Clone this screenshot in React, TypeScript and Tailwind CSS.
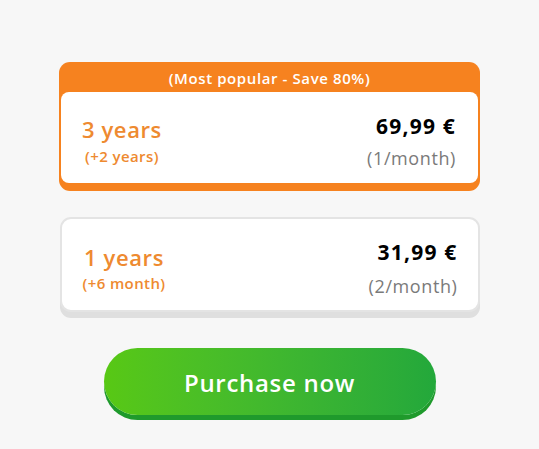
export default function App() {
  const font = { fontFamily: '"Open Sans", "Noto Sans", sans-serif' };
  return (
    <div className="min-h-[449px] w-full bg-[#f7f7f7] flex flex-col items-center pt-[62px]" style={font}>
      {/* Popular plan */}
      <div className="w-[421px] rounded-[11px] bg-[#f6821f] px-[2px] pb-[8px]">
        <div className="h-[30px] flex items-center justify-center text-white text-[15px] font-semibold tracking-[0.6px] pt-[3px]">
          (Most popular - Save 80%)
        </div>
        <div className="h-[91px] rounded-[8px] bg-white flex items-center justify-between pl-[21px] pr-[22px] pt-[6px]">
          <div className="flex flex-col items-center">
            <span className="text-[#ee8a30] text-[22px] font-semibold leading-[26px] tracking-[0.6px]">3 years</span>
            <span className="text-[#ee8a30] text-[15px] font-semibold mt-[5px] leading-[18px] tracking-[0.4px]">(+2 years)</span>
          </div>
          <div className="flex flex-col items-end">
            <span className="text-black text-[21px] font-bold leading-[26px] tracking-[1.2px]">69,99 €</span>
            <span className="text-[#7a7a7a] text-[18px] leading-[22px] mt-[8px] tracking-[0.6px]">(1/month)</span>
          </div>
        </div>
      </div>

      {/* Standard plan */}
      <div className="mt-[26px] w-[420px] h-[95px] rounded-[11px] bg-white border-2 border-[#e4e4e4] shadow-[0_6px_0_#dfdfdf] flex items-center justify-between pl-[21px] pr-[20px] pt-[6px]">
        <div className="flex flex-col items-center">
          <span className="text-[#ee8a30] text-[22px] font-semibold leading-[26px] tracking-[0.6px]">1 years</span>
          <span className="text-[#ee8a30] text-[15px] font-semibold mt-[4px] leading-[18px] tracking-[0.4px]">(+6 month)</span>
        </div>
        <div className="flex flex-col items-end">
          <span className="text-black text-[21px] font-bold leading-[26px] tracking-[1.2px]">31,99 €</span>
          <span className="text-[#7a7a7a] text-[18px] leading-[22px] mt-[10px] tracking-[0.6px]">(2/month)</span>
        </div>
      </div>

      {/* Purchase button */}
      <button className="mt-[36px] w-[332px] h-[67px] rounded-full bg-gradient-to-r from-[#58c814] to-[#23a83b] shadow-[0_5px_0_#1f9a2c] text-white text-[24px] font-semibold tracking-[0.7px] pt-[2px] flex items-center justify-center">
        Purchase now
      </button>
    </div>
  );
}
